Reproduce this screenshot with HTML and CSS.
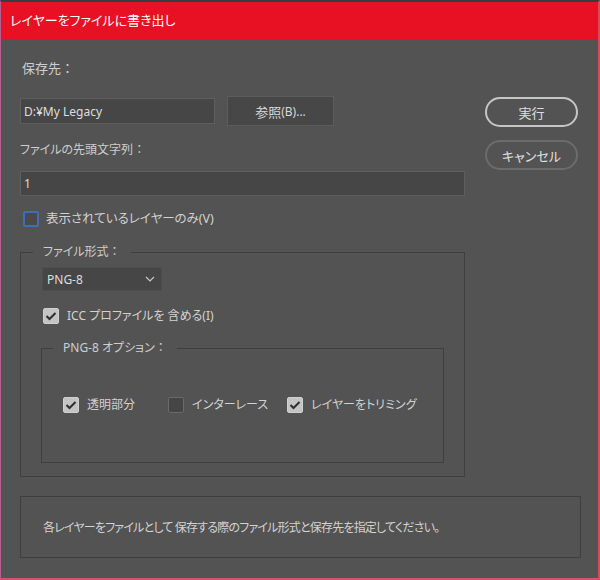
FILE: index.html
```html
<!DOCTYPE html>
<html lang="ja">
<head>
<meta charset="utf-8">
<title>レイヤーをファイルに書き出し</title>
<link rel="stylesheet" href="styles.css">
</head>
<body>
<div class="window">
  <div class="titlebar">レイヤーをファイルに書き出し</div>
  <div class="content">
    <div class="top">
      <div class="left">
        <div class="label l1">保存先<span class="colon">：</span></div>
        <div class="pathrow">
          <div class="input path">D:¥My Legacy</div>
          <div class="btn browse">参照<span class="acc">(B)...</span></div>
        </div>
        <div class="label l2">ファイルの先頭文字列<span class="colon">：</span></div>
        <div class="input prefix">1</div>
        <div class="check visible"><span class="box focus"></span><span class="ctext">表示されているレイヤーのみ(V)</span></div>
        <fieldset class="group outer">
          <legend>ファイル形式<span class="colon">：</span></legend>
          <div class="select">PNG-8<svg class="chev" width="10" height="6" viewBox="0 0 10 6"><polyline points="1,1 5,5 9,1" fill="none" stroke="#c8c8c8" stroke-width="1.2"/></svg></div>
          <div class="check icc"><span class="box on"><svg width="12" height="10" viewBox="0 0 12 10"><polyline points="1.5,5 4.5,8 10.5,2" fill="none" stroke="#2e2e2e" stroke-width="2"/></svg></span><span class="ctext">ICC プロファイルを 含める(I)</span></div>
          <fieldset class="group inner">
            <legend>PNG-8 オプション<span class="colon">：</span></legend>
            <div class="opts">
              <div class="check"><span class="box on"><svg width="12" height="10" viewBox="0 0 12 10"><polyline points="1.5,5 4.5,8 10.5,2" fill="none" stroke="#2e2e2e" stroke-width="2"/></svg></span><span class="ctext">透明部分</span></div>
              <div class="check"><span class="box off"></span><span class="ctext">インターレース</span></div>
              <div class="check"><span class="box on"><svg width="12" height="10" viewBox="0 0 12 10"><polyline points="1.5,5 4.5,8 10.5,2" fill="none" stroke="#2e2e2e" stroke-width="2"/></svg></span><span class="ctext">レイヤーをトリミング</span></div>
            </div>
          </fieldset>
        </fieldset>
      </div>
      <div class="right">
        <div class="pill run">実行</div>
        <div class="pill cancel">キャンセル</div>
      </div>
    </div>
    <div class="desc">各レイヤーをファイルとして 保存する際のファイル形式と保存先を指定してください。</div>
  </div>
</div>
</body>
</html>
```
FILE: styles.css
```css
* { box-sizing: border-box; }
html, body {
  margin: 0;
  padding: 0;
  background: #535353;
}
body {
  width: 600px;
  height: 580px;
  overflow: hidden;
  font-family: "Noto Sans", "Noto Sans CJK JP", sans-serif;
  font-size: 12px;
  color: #d2d2d2;
  font-feature-settings: "palt";
}
.colon { font-feature-settings: normal; }
.window {
  width: 600px;
  height: 580px;
  border-top: 2px solid #3c3c3c;
  border-left: 1px solid #b25f8e;
  border-right: 2px solid #dc4b55;
  border-bottom: 2px solid #d8506a;
  display: flex;
  flex-direction: column;
}
.titlebar {
  height: 37px;
  background: #e81123;
  color: #ffffff;
  font-size: 13px;
  line-height: 37px;
  padding-left: 9px;
}
.content {
  padding-left: 19px;
  padding-right: 17px;
}
.top {
  display: flex;
}
.left {
  width: 445px;
  display: flex;
  flex-direction: column;
}
.label {
  line-height: 16px;
  height: 16px;
  color: #cecece;
}
.l1 { margin-top: 21px; margin-left: 2px; font-size: 13px; }
.l2 { margin-top: 16px; }
.pathrow {
  margin-top: 20px;
  display: flex;
  align-items: center;
  height: 30px;
}
.input {
  background: #464646;
  border: 1px solid #5e5e5e;
  color: #dedede;
  padding-left: 3px;
  display: flex;
  align-items: center;
}
.path { width: 195px; height: 26px; }
.btn {
  margin-left: 12px;
  width: 107px;
  height: 30px;
  background: #474747;
  border: 1px solid #5c5c5c;
  display: flex;
  align-items: center;
  justify-content: center;
  color: #d8d8d8;
  font-size: 13px;
}
.acc { font-size: 12px; }
.prefix {
  margin-top: 13px;
  width: 445px;
  height: 25px;
}
.check {
  display: flex;
  align-items: center;
  height: 16px;
  white-space: nowrap;
}
.ctext { margin-left: 8px; line-height: 16px; }
.box {
  width: 16px;
  height: 16px;
  border-radius: 2px;
  flex: none;
  display: flex;
  align-items: center;
  justify-content: center;
}
.box.on {
  background: #c4c4c4;
  border: 1px solid #d0d0d0;
}
.box.off {
  background: #454545;
  border: 1px solid #6a6a6a;
}
.box.focus {
  background: #4a4a4a;
  border: 2px solid #3f6db8;
}
.visible {
  margin-top: 15px;
  margin-left: 3px;
}
.visible .ctext { margin-left: 7px; font-size: 12.5px; }
.group {
  margin: 0;
  border: 1px solid #3f3f3f;
  min-width: 0;
}
.group legend {
  line-height: 16px;
  padding: 0 10px;
  color: #cecece;
}
.outer {
  margin-top: 17px;
  width: 445px;
  padding: 7px 20px 13px 21px;
}
.outer > legend { margin-left: -9px; }
.select {
  width: 120px;
  height: 24px;
  background: #464646;
  border: 1px solid #4e4e4e;
  display: flex;
  align-items: center;
  justify-content: space-between;
  padding: 0 6px 0 4px;
  color: #dedede;
}
.icc {
  margin-top: 17px;
  margin-left: 1px;
}
.inner {
  margin-top: 16px;
  margin-left: -1px;
  width: 403px;
  padding: 41px 10px 49px 21px;
}
.inner > legend { margin-left: -10px; }
.opts {
  display: grid;
  grid-template-columns: 105px 119px auto;
}
.right {
  margin-left: 20px;
  display: flex;
  flex-direction: column;
  margin-top: 58px;
}
.pill {
  width: 93px;
  height: 30px;
  border-radius: 15px;
  display: flex;
  align-items: center;
  justify-content: center;
  font-size: 13px;
  color: #e0e0e0;
}
.run { border: 2px solid #c6c6c6; }
.cancel { margin-top: 13px; border: 2px solid #6c6c6c; }
.desc {
  margin-top: 19px;
  width: 561px;
  height: 62px;
  border: 1px solid #3f3f3f;
  padding-left: 22px;
  display: flex;
  align-items: center;
  color: #d2d2d2;
  letter-spacing: -0.8px;
}
```
